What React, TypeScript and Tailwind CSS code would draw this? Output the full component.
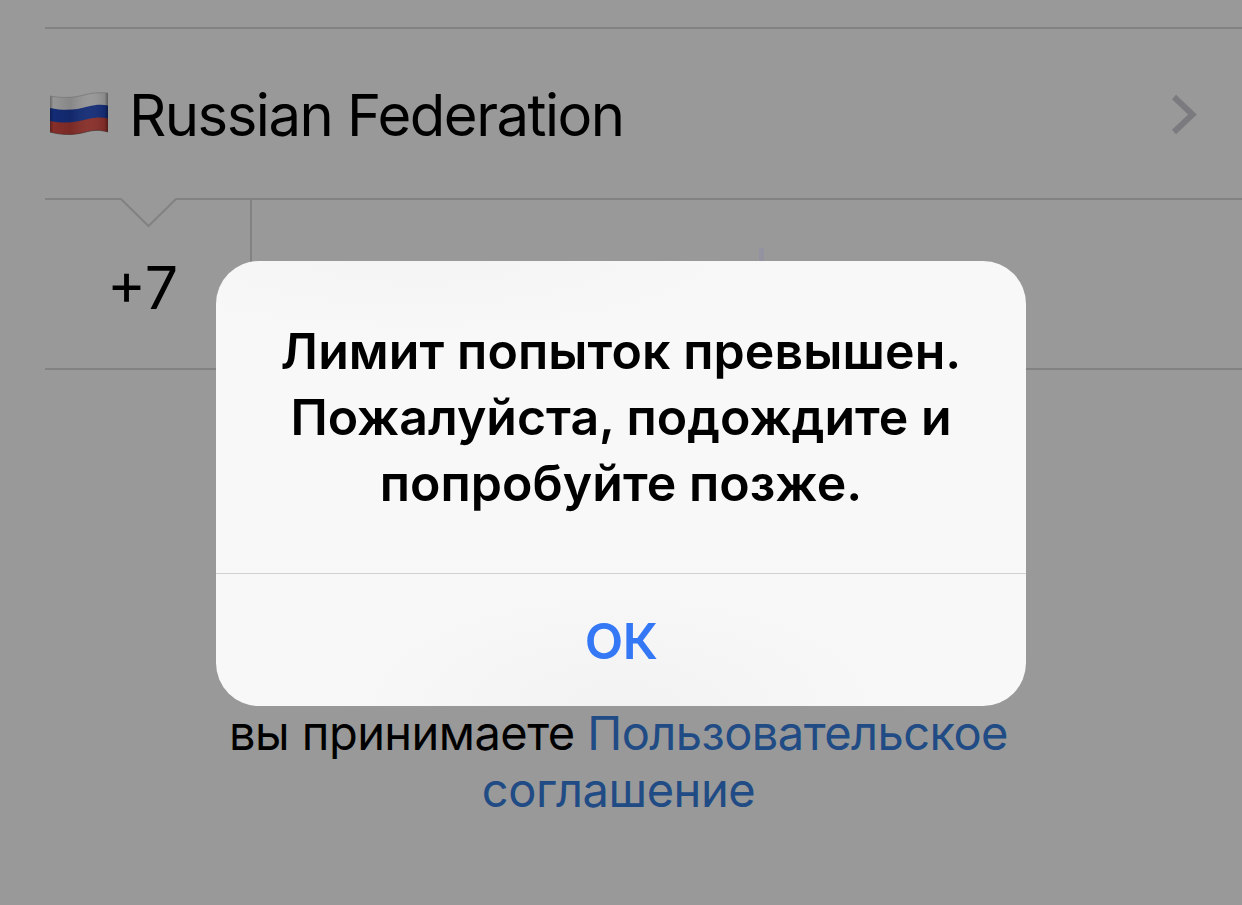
import React from "react";

function RussianFlag() {
  return (
    <svg width="62" height="46" viewBox="0 0 62 46" className="block shrink-0" aria-hidden="true">
      <defs>
        <linearGradient id="shade" x1="0" x2="1" y1="0" y2="0">
          <stop offset="0" stopColor="#000" stopOpacity="0.3" />
          <stop offset="0.06" stopColor="#000" stopOpacity="0" />
          <stop offset="0.35" stopColor="#000" stopOpacity="0.1" />
          <stop offset="0.72" stopColor="#fff" stopOpacity="0.04" />
          <stop offset="0.94" stopColor="#000" stopOpacity="0.08" />
          <stop offset="1" stopColor="#000" stopOpacity="0.4" />
        </linearGradient>
      </defs>
      <path d="M2 5C18 8 29 6 40 3C48 1.500 54 1.500 60 2V20H2Z" fill="#969696" />
      <path d="M2 17C18 20.500 29 18.500 40 15.500C48 13.500 54 13.500 60 14.500V32H2Z" fill="#142c76" />
      <path d="M2 30C18 33 29 31 40 28C48 26 54 26 60 27.500V41C51 38.500 45 39 36 41.500C24 44.500 13 44 2 41Z" fill="#872e29" />
      <path d="M2 5C18 8 29 6 40 3C48 1.500 54 1.500 60 2V41C51 38.500 45 39 36 41.500C24 44.500 13 44 2 41Z" fill="url(#shade)" />
      <path d="M2 41C13 44 24 44.500 36 41.500C45 39 51 38.500 60 41" fill="none" stroke="#3d2422" strokeOpacity="0.6" />
      <path d="M2 5C18 8 29 6 40 3C48 1.500 54 1.500 60 2" fill="none" stroke="#707070" strokeOpacity="0.6" />
    </svg>
  );
}

function CountryRow() {
  return (
    <button className="ml-[45px] flex h-[171px] w-[1197px] items-center border-t-2 border-[#828282] pl-[3px] pr-[44px] text-left">
      <RussianFlag />
      <span className="ml-[19px] whitespace-nowrap pt-[3px] text-[58px] leading-[70px] tracking-[-1.5px]">Russian Federation</span>
      <svg width="28" height="42" viewBox="0 0 28 42" className="ml-auto block" aria-hidden="true">
        <path d="M4 4L22.500 21.500L4 39" fill="none" stroke="#7b7b7f" strokeWidth="6" />
      </svg>
    </button>
  );
}

function PhoneRow() {
  return (
    <div className="relative ml-[45px] flex h-[172px] w-[1197px] border-b-2 border-[#828282]">
      <svg width="1197" height="30" viewBox="0 0 1197 30" className="absolute left-0 top-0" aria-hidden="true">
        <path d="M0 1H76L103.500 28L131 1H1197" fill="none" stroke="#828282" strokeWidth="2" />
      </svg>
      <div className="flex w-[207px] items-center justify-center border-r-2 border-[#828282] pt-[9px] pr-[10px]">
        <span className="text-[59px] leading-[70px]">+7</span>
      </div>
      <div className="flex-1 pl-[507px] pt-[50px]">
        <div className="h-[16px] w-[5px] bg-[#9292a0]" />
      </div>
    </div>
  );
}

function Alert() {
  return (
    <div className="absolute left-[216px] top-[261px] flex h-[445px] w-[810px] flex-col overflow-hidden rounded-[43px] bg-[#f8f8f8] bg-[radial-gradient(ellipse_280px_120px_at_50%_100%,#f2f2f2,transparent),radial-gradient(ellipse_350px_80px_at_25%_0%,#f4f4f4,transparent)]">
      <div className="flex h-[312px] flex-col items-center pt-[57px] text-[50px] font-semibold leading-[66px]">
        <span className="whitespace-nowrap tracking-[0.1px]">Лимит попыток превышен.</span>
        <span className="whitespace-nowrap">Пожалуйста, подождите и</span>
        <span className="whitespace-nowrap tracking-[0.05px]">попробуйте позже.</span>
      </div>
      <button className="flex flex-1 items-center justify-center border-t border-[#d0d0d2] pt-[3px] text-[50px] font-semibold tracking-[-0.5px] text-[#3478f6]">
        ОК
      </button>
    </div>
  );
}

export default function App() {
  return (
    <main className="relative h-[905px] w-[1242px] overflow-hidden bg-[#999999] pt-[27px] font-['Inter',sans-serif] text-black">
      <CountryRow />
      <PhoneRow />
      <div className="mt-[334px] flex flex-col items-center text-[47px] leading-[57px]">
        <span className="whitespace-nowrap pr-[5px] tracking-[-0.55px]">
          вы принимаете <a className="text-[#204b84]">Пользовательское</a>
        </span>
        <a className="whitespace-nowrap pr-[5px] tracking-[-0.45px] text-[#204b84]">соглашение</a>
      </div>
      <Alert />
    </main>
  );
}
